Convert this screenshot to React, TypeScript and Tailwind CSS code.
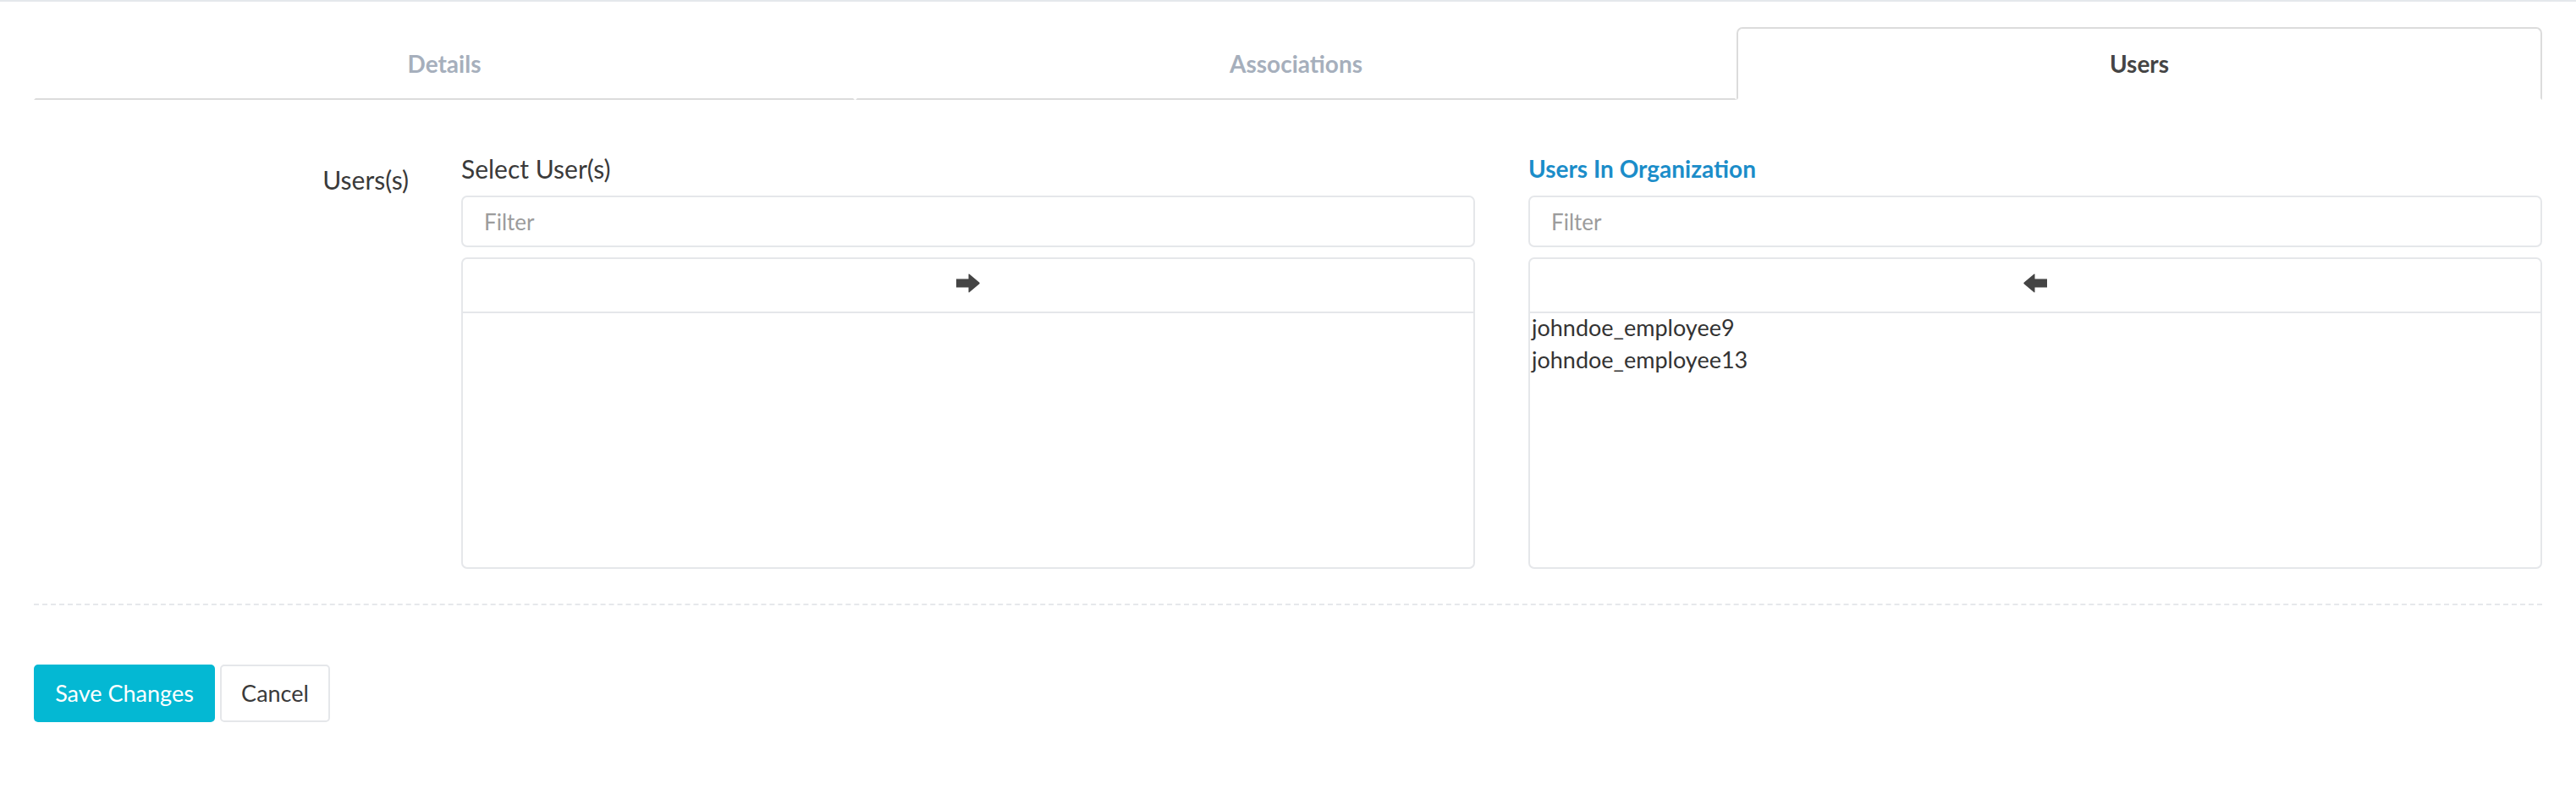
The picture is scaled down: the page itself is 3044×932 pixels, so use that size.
import React from "react";

function ArrowRight() {
  return (
    <svg width="28" height="23" viewBox="0 0 28 23" aria-hidden="true">
      <path d="M0 6.5 H14.5 V1.2 Q14.5 0 15.5 0.8 L27.4 10.8 Q28 11.5 27.4 12.2 L15.5 22.2 Q14.5 23 14.5 21.8 V16.5 H0 Z" fill="#444444" />
    </svg>
  );
}

function ArrowLeft() {
  return (
    <svg width="28" height="23" viewBox="0 0 28 23" aria-hidden="true">
      <g transform="translate(28 0) scale(-1 1)">
        <path d="M0 6.5 H14.5 V1.2 Q14.5 0 15.5 0.8 L27.4 10.8 Q28 11.5 27.4 12.2 L15.5 22.2 Q14.5 23 14.5 21.8 V16.5 H0 Z" fill="#444444" />
      </g>
    </svg>
  );
}

function FilterInput() {
  return (
    <input
      type="text"
      placeholder="Filter"
      className="mt-[14px] block h-[61px] w-full rounded-[7px] border-2 border-[#e5e7ea] bg-white px-[25px] text-[26px] text-[#333] outline-none placeholder:text-[#9c9c9c]"
    />
  );
}

function ListBox({ dir, items }: { dir: "right" | "left"; items: string[] }) {
  return (
    <div className="mt-[12px] flex h-[368px] flex-col rounded-[7px] border-2 border-[#e5e7ea] bg-white">
      <div className="flex h-[64px] shrink-0 items-center justify-center border-b-2 border-[#e5e7ea] pb-[5px]">
        {dir === "right" ? <ArrowRight /> : <ArrowLeft />}
      </div>
      <div className="-mt-[2px] flex flex-col pl-[2px] text-[27px] leading-[38px] text-[#333]">
        {items.map((it) => (
          <div key={it}>{it}</div>
        ))}
      </div>
    </div>
  );
}

export default function App() {
  return (
    <div className="min-h-[932px] w-full border-t-2 border-[#e4e8ec] bg-white font-[Lato,sans-serif] text-[#333]">
      <div className="px-[40px]">
        {/* Tabs */}
        <div className="mt-[30px] flex">
          <div className="flex h-[86px] w-[970px] items-center justify-center border-2 border-transparent border-b-[#dcdcdc] text-[28px] font-bold text-[#a6afbc]">
            Details
          </div>
          <div className="ml-[1px] flex h-[86px] w-[1041px] items-center justify-center border-2 border-transparent border-b-[#dcdcdc] text-[28px] font-bold text-[#a6afbc]">
            Associations
          </div>
          <div className="flex h-[86px] flex-1 items-center justify-center rounded-t-[7px] border-2 border-[#dcdcdc] border-b-transparent text-[28px] font-bold text-[#444]">
            Users
          </div>
        </div>

        {/* Form row */}
        <div className="mt-[63px] flex">
          <div className="w-[443px] shrink-0 pt-[13px] text-right text-[30px] leading-[36px] text-[#3a3a3a]">
            Users(s)
          </div>
          <div className="ml-[62px] grid flex-1 grid-cols-2 gap-x-[63px]">
            <div className="flex flex-col">
              <div className="text-[30px] leading-[36px] text-[#3a3a3a]">Select User(s)</div>
              <FilterInput />
              <ListBox dir="right" items={[]} />
            </div>
            <div className="flex flex-col">
              <div className="text-[28px] font-bold leading-[36px] text-[#1b8dc9]">Users In Organization</div>
              <FilterInput />
              <ListBox dir="left" items={["johndoe_employee9", "johndoe_employee13"]} />
            </div>
          </div>
        </div>

        {/* Divider */}
        <div className="mt-[41px] border-t-2 border-dashed border-[#e6e8eb]" />

        {/* Buttons */}
        <div className="mt-[70px] flex gap-[6px]">
          <button className="flex h-[68px] w-[214px] items-center justify-center rounded-[5px] bg-[#04b8d3] text-[27px] text-white">
            Save Changes
          </button>
          <button className="flex h-[68px] w-[130px] items-center justify-center rounded-[5px] border-2 border-[#e5e7ea] bg-white text-[27px] text-[#3a3a3a]">
            Cancel
          </button>
        </div>
      </div>
    </div>
  );
}
